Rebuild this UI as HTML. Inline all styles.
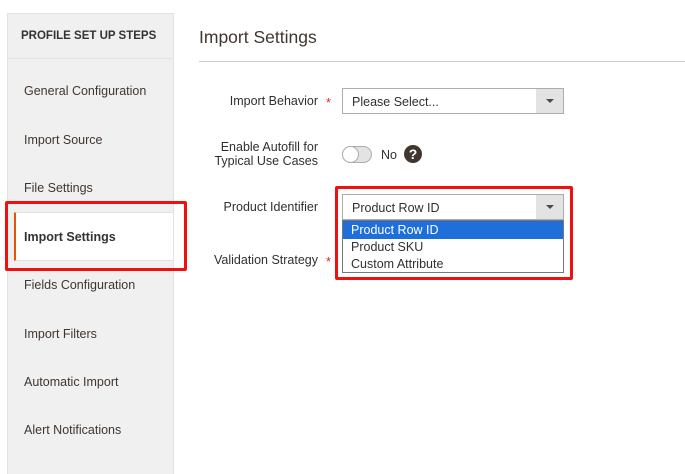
<!DOCTYPE html>
<html><head><style>
body{margin:0;width:685px;height:460px;background:#fff;font-family:"Liberation Sans",sans-serif;color:#333;position:relative;overflow:hidden}
.a{position:absolute}
.side{left:7px;top:13px;width:165px;height:460px;background:#f0f0f0;border:1px solid #e3e3e3;border-bottom:none}
.hd{left:21px;top:30px;font-size:11.5px;font-weight:bold;color:#333}
.it{left:24px;font-size:12.5px;color:#41362f}
.sel{border:1px solid #adadad;background:#fff;width:222px;height:26px;box-sizing:border-box}
.sel span{position:absolute;left:9px;top:6px;font-size:12.5px;color:#303030}
.sel i{position:absolute;right:0;top:0;width:27px;height:24px;background:#e3e3e3}
.sel i:after{content:"";position:absolute;left:10px;top:10px;border:4px solid transparent;border-top:4px solid #514943;border-bottom:0}
.lb{font-size:12.5px;color:#303030;text-align:right}
.st{color:#e22626;font-size:13px}
.red{border:3px solid #f01010;box-sizing:border-box;border-radius:2px}
</style></head><body>
<div class="a side"></div>
<div class="a" style="left:8px;top:58px;width:165px;border-top:1px solid #e3e3e3"></div>
<div class="a hd">PROFILE SET UP STEPS</div>
<div class="a it" style="top:84px">General Configuration</div>
<div class="a it" style="top:133px">Import Source</div>
<div class="a it" style="top:181px">File Settings</div>
<div class="a" style="left:14px;top:212px;width:159px;height:49px;background:#fff;border-top:1px solid #e3e3e3;border-bottom:1px solid #e3e3e3;border-left:2px solid #eb5202;box-sizing:border-box"></div>
<div class="a it" style="top:230px;font-weight:bold;color:#333">Import Settings</div>
<div class="a red" style="left:5px;top:201px;width:182px;height:70px"></div>
<div class="a it" style="top:278px">Fields Configuration</div>
<div class="a it" style="top:327px">Import Filters</div>
<div class="a it" style="top:375px">Automatic Import</div>
<div class="a it" style="top:423px">Alert Notifications</div>

<div class="a" style="left:199px;top:27px;font-size:17.5px;color:#41362f">Import Settings</div>
<div class="a" style="left:199px;top:61px;width:486px;border-top:1px solid #ccc"></div>

<div class="a lb" style="left:200px;top:94px;width:118px">Import Behavior</div>
<div class="a st" style="left:326px;top:95px">*</div>
<div class="a sel" style="left:342px;top:88px"><span>Please Select...</span><i></i></div>

<div class="a lb" style="left:200px;top:140px;width:118px;line-height:14px">Enable Autofill for<br>Typical Use Cases</div>
<div class="a" style="left:342px;top:146px;width:30px;height:17px;border:1px solid #adadad;border-radius:9px;box-sizing:border-box;background:#e3e3e3"></div>
<div class="a" style="left:342px;top:146px;width:17px;height:17px;border:1px solid #adadad;border-radius:50%;box-sizing:border-box;background:#fff"></div>
<div class="a" style="left:381px;top:148px;font-size:12.5px;color:#303030">No</div>
<div class="a" style="left:404px;top:145px;width:18px;height:18px;border-radius:50%;background:#41362f;color:#fff;font-weight:bold;font-size:14px;text-align:center;line-height:18px">?</div>

<div class="a lb" style="left:200px;top:200px;width:118px">Product Identifier</div>
<div class="a sel" style="left:342px;top:194px"><span>Product Row ID</span><i></i></div>
<div class="a" style="left:342px;top:220px;width:222px;height:53px;border:1px solid #777;box-sizing:border-box;background:#fff;font-size:12.5px;color:#303030">
<div style="background:#1e6fd9;color:#fff;height:18px;line-height:18px;padding-left:8px">Product Row ID</div>
<div style="height:17px;line-height:17px;padding-left:8px">Product SKU</div>
<div style="height:16px;line-height:16px;padding-left:8px">Custom Attribute</div>
</div>
<div class="a lb" style="left:200px;top:253px;width:118px">Validation Strategy</div>
<div class="a st" style="left:326px;top:254px">*</div>
<div class="a red" style="left:335px;top:186px;width:238px;height:94px"></div>
</body></html>
